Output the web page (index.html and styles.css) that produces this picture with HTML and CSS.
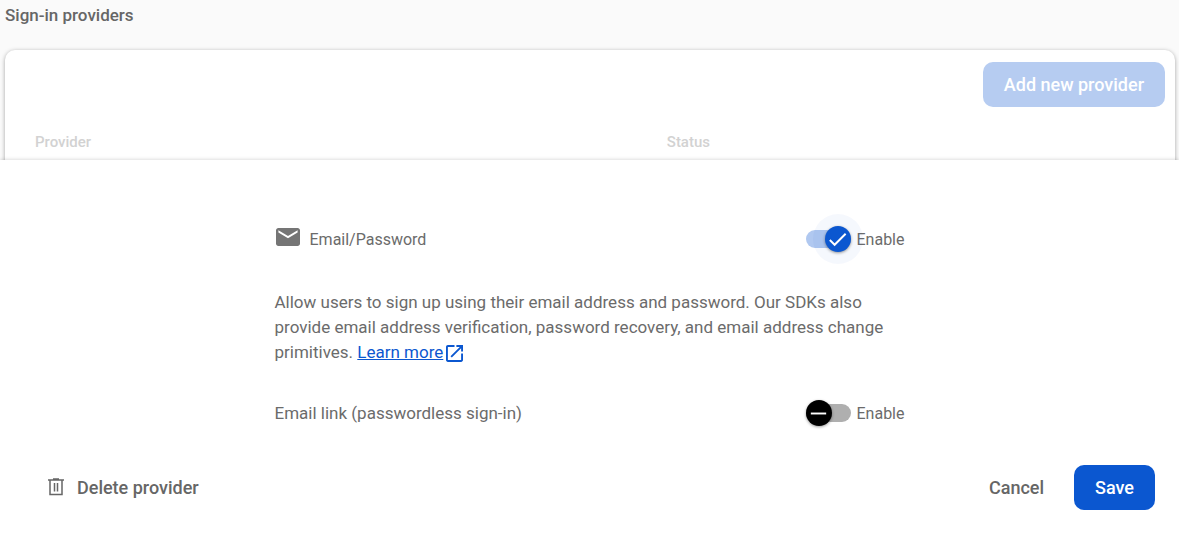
FILE: index.html
```html
<!DOCTYPE html>
<html lang="en">
<head>
  <meta charset="UTF-8" />
  <meta name="viewport" content="width=device-width, initial-scale=1.0" />
  <title>Sign-in providers</title>
  <link rel="stylesheet" href="styles.css">
</head>
<body>
  <h1>Sign-in providers</h1>

  <div class="card">
    <div class="toolbar">
      <button type="button" class="btn btn-primary" disabled>Add new provider</button>
    </div>
    <table class="providers">
      <thead>
        <tr>
          <th class="col-provider" scope="col">Provider</th>
          <th scope="col">Status</th>
        </tr>
      </thead>
    </table>
  </div>

  <form class="panel">
    <div class="fields">
      <div class="row">
        <div class="provider-name">
          <svg class="mail-icon" viewBox="2 4 20 16" preserveAspectRatio="none" aria-hidden="true">
            <path d="M20 4H4c-1.100 0-2 .9-2 2v12c0 1.100.9 2 2 2h16c1.100 0 2-.9 2-2V6c0-1.100-.9-2-2-2zm0 4l-8 5-8-5V6l8 5 8-5v2z" />
          </svg>
          <span>Email/Password</span>
        </div>
        <label class="switch">
          <span class="switch-control">
            <input type="checkbox" checked>
            <span class="thumb">
              <svg viewBox="0 0 24 24" aria-hidden="true"><path d="M4 12.500l5 5L20.500 6" /></svg>
            </span>
          </span>
          Enable
        </label>
      </div>

      <p class="description">
        Allow users to sign up using their email address and password. Our SDKs also provide email address verification, password recovery, and email address change primitives.
        <a href="#">Learn more</a><svg class="open-icon" viewBox="3 3 18 18" aria-hidden="true">
          <path d="M19 19H5V5h7V3H5c-1.110 0-2 .9-2 2v14c0 1.100.89 2 2 2h14c1.100 0 2-.9 2-2v-7h-2v7zM14 3v2h3.590l-9.830 9.830 1.410 1.410L19 6.410V10h2V3h-7z" />
        </svg>
      </p>

      <div class="row">
        <span class="option-name">Email link (passwordless sign-in)</span>
        <label class="switch">
          <span class="switch-control">
            <input type="checkbox">
            <span class="thumb">
              <svg viewBox="0 0 24 24" aria-hidden="true"><path d="M4 12h16" /></svg>
            </span>
          </span>
          Enable
        </label>
      </div>
    </div>

    <div class="footer">
      <button type="button" class="btn btn-text btn-delete">
        <svg class="trash-icon" viewBox="0 0 16 18" aria-hidden="true">
          <path d="M0 2h16M5 1h6M2 2v14.500h12V2M6.500 5v8.500M9.500 5v8.500" />
        </svg>
        Delete provider
      </button>
      <div class="footer-actions">
        <button type="button" class="btn btn-text">Cancel</button>
        <button type="submit" class="btn btn-primary">Save</button>
      </div>
    </div>
  </form>
</body>
</html>
```

FILE: styles.css
```css
* {
  box-sizing: border-box;
}

body {
  margin: 0;
  font-family: Roboto, Arial, sans-serif;
  font-size: 17px;
  color: #6b6b6b;
  background: #fafafa;
}

h1 {
  margin: 0;
  padding: 3px 5px 0;
  font-size: 17px;
  font-weight: 500;
  line-height: 24px;
  color: #666;
}

.card {
  margin: 23px 4px 0 5px;
  background: #fff;
  border-radius: 10px 10px 0 0;
  box-shadow: 0 1px 4px rgba(0, 0, 0, 0.35);
}

.toolbar {
  display: flex;
  justify-content: flex-end;
  padding: 12px 10px 23px;
}

.btn {
  height: 45px;
  padding: 0 21px;
  border: none;
  border-radius: 10px;
  font-family: inherit;
  font-size: 18px;
  font-weight: 500;
  cursor: pointer;
}

.btn-primary {
  background: #0b57d0;
  color: #fff;
}

.btn-primary:disabled {
  background: #b6ccf1;
  cursor: default;
}

.btn-text {
  background: none;
  color: #666;
}

.providers {
  width: 100%;
  table-layout: fixed;
  border-collapse: collapse;
}

.providers th {
  padding: 0 30px 9px;
  font-size: 15px;
  font-weight: 500;
  line-height: 24px;
  text-align: left;
  color: #d2d2d2;
}

.col-provider {
  width: 54%;
}

/* edit panel, sits over the table */
.panel {
  position: relative;
  margin-top: -3px;
  min-height: calc(100vh - 160px);
  padding-top: 54px;
  background: #fff;
  box-shadow: 0 0 4px rgba(0, 0, 0, 0.2);
}

.fields {
  max-width: 630px;
  margin: 0 auto;
}

.row {
  display: flex;
  align-items: center;
  justify-content: space-between;
  height: 50px;
}

.provider-name {
  display: flex;
  align-items: center;
  gap: 10px;
  padding-left: 1px;
  font-size: 16px;
}

.mail-icon {
  width: 24px;
  height: 18px;
  margin-bottom: 4px;
  fill: #757575;
}

.description {
  margin: 26px 0 23px;
  line-height: 25px;
}

.description a {
  color: #0b57d0;
}

.open-icon {
  width: 17px;
  height: 17px;
  margin-left: 3px;
  vertical-align: -4px;
  fill: #0b57d0;
}

.switch {
  display: flex;
  align-items: center;
  gap: 6px;
  font-size: 16px;
  cursor: pointer;
}

.switch-control {
  position: relative;
  display: flex;
}

.switch input {
  appearance: none;
  width: 45px;
  height: 18px;
  margin: 0;
  border-radius: 9px;
  background: #afafaf;
  cursor: pointer;
}

.switch input:checked {
  background: #b0c8f0;
}

.thumb {
  position: absolute;
  top: -4px;
  left: 0;
  display: flex;
  align-items: center;
  justify-content: center;
  width: 26px;
  height: 26px;
  border-radius: 50%;
  background: #000;
  box-shadow: 0 1px 3px rgba(0, 0, 0, 0.4);
}

.thumb svg {
  width: 23px;
  height: 23px;
  fill: none;
  stroke: #fff;
  stroke-width: 2;
}

.switch input:checked + .thumb {
  left: auto;
  right: 0;
  background: #0b57d0;
  box-shadow: 0 1px 3px rgba(0, 0, 0, 0.4), 0 0 0 12px rgba(11, 87, 208, 0.04);
}

.footer {
  display: flex;
  align-items: center;
  justify-content: space-between;
  padding: 27px 24px 23px 27px;
}

.footer-actions {
  display: flex;
  gap: 9px;
}

.btn-delete {
  display: flex;
  align-items: center;
  gap: 13px;
}

.trash-icon {
  width: 16px;
  height: 18px;
  margin-bottom: 2px;
  fill: none;
  stroke: #666;
  stroke-width: 1.500;
}
```
